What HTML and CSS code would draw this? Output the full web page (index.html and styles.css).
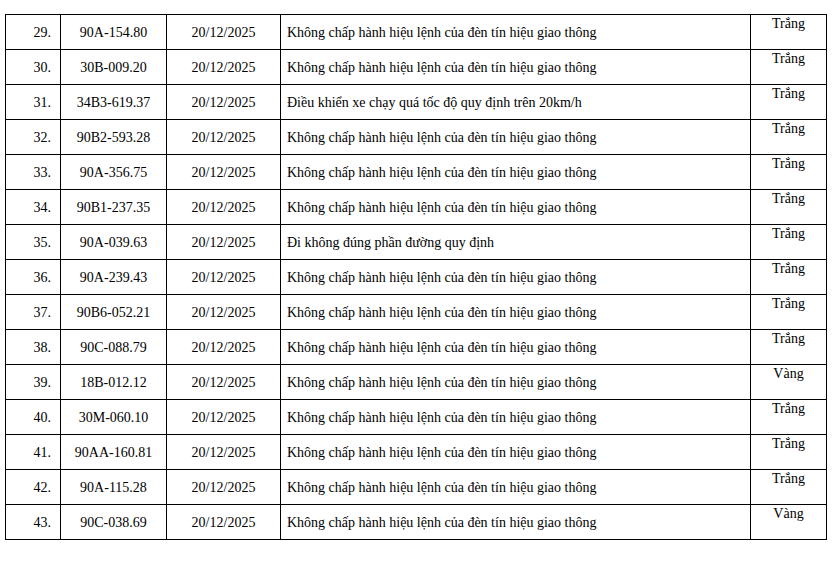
FILE: index.html
```html
<!DOCTYPE html>
<html lang="vi">
<head>
<meta charset="utf-8">
<link rel="stylesheet" href="styles.css">
</head>
<body>
<table class="list">
<colgroup>
<col class="c-no"><col class="c-plate"><col class="c-date"><col class="c-desc"><col class="c-color">
</colgroup>
<tbody>
<tr><td class="no">29.</td><td class="ctr">90A-154.80</td><td class="ctr">20/12/2025</td><td class="desc">Không chấp hành hiệu lệnh của đèn tín hiệu giao thông</td><td class="color">Trắng</td></tr>
<tr><td class="no">30.</td><td class="ctr">30B-009.20</td><td class="ctr">20/12/2025</td><td class="desc">Không chấp hành hiệu lệnh của đèn tín hiệu giao thông</td><td class="color">Trắng</td></tr>
<tr><td class="no">31.</td><td class="ctr">34B3-619.37</td><td class="ctr">20/12/2025</td><td class="desc">Điều khiển xe chạy quá tốc độ quy định trên 20km/h</td><td class="color">Trắng</td></tr>
<tr><td class="no">32.</td><td class="ctr">90B2-593.28</td><td class="ctr">20/12/2025</td><td class="desc">Không chấp hành hiệu lệnh của đèn tín hiệu giao thông</td><td class="color">Trắng</td></tr>
<tr><td class="no">33.</td><td class="ctr">90A-356.75</td><td class="ctr">20/12/2025</td><td class="desc">Không chấp hành hiệu lệnh của đèn tín hiệu giao thông</td><td class="color">Trắng</td></tr>
<tr><td class="no">34.</td><td class="ctr">90B1-237.35</td><td class="ctr">20/12/2025</td><td class="desc">Không chấp hành hiệu lệnh của đèn tín hiệu giao thông</td><td class="color">Trắng</td></tr>
<tr><td class="no">35.</td><td class="ctr">90A-039.63</td><td class="ctr">20/12/2025</td><td class="desc">Đi không đúng phần đường quy định</td><td class="color">Trắng</td></tr>
<tr><td class="no">36.</td><td class="ctr">90A-239.43</td><td class="ctr">20/12/2025</td><td class="desc">Không chấp hành hiệu lệnh của đèn tín hiệu giao thông</td><td class="color">Trắng</td></tr>
<tr><td class="no">37.</td><td class="ctr">90B6-052.21</td><td class="ctr">20/12/2025</td><td class="desc">Không chấp hành hiệu lệnh của đèn tín hiệu giao thông</td><td class="color">Trắng</td></tr>
<tr><td class="no">38.</td><td class="ctr">90C-088.79</td><td class="ctr">20/12/2025</td><td class="desc">Không chấp hành hiệu lệnh của đèn tín hiệu giao thông</td><td class="color">Trắng</td></tr>
<tr><td class="no">39.</td><td class="ctr">18B-012.12</td><td class="ctr">20/12/2025</td><td class="desc">Không chấp hành hiệu lệnh của đèn tín hiệu giao thông</td><td class="color">Vàng</td></tr>
<tr><td class="no">40.</td><td class="ctr">30M-060.10</td><td class="ctr">20/12/2025</td><td class="desc">Không chấp hành hiệu lệnh của đèn tín hiệu giao thông</td><td class="color">Trắng</td></tr>
<tr><td class="no">41.</td><td class="ctr">90AA-160.81</td><td class="ctr">20/12/2025</td><td class="desc">Không chấp hành hiệu lệnh của đèn tín hiệu giao thông</td><td class="color">Trắng</td></tr>
<tr><td class="no">42.</td><td class="ctr">90A-115.28</td><td class="ctr">20/12/2025</td><td class="desc">Không chấp hành hiệu lệnh của đèn tín hiệu giao thông</td><td class="color">Trắng</td></tr>
<tr><td class="no">43.</td><td class="ctr">90C-038.69</td><td class="ctr">20/12/2025</td><td class="desc">Không chấp hành hiệu lệnh của đèn tín hiệu giao thông</td><td class="color">Vàng</td></tr>
</tbody>
</table>
</body>
</html>
```
FILE: styles.css
```css
html, body {
  margin: 0;
  padding: 0;
  background: #fff;
}
body {
  font-family: "Liberation Serif", "Times New Roman", serif;
  font-size: 14px;
  color: #000;
}
.list {
  border-collapse: collapse;
  table-layout: fixed;
  width: 822px;
  margin: 14px 0 0 5px;
}
.c-no { width: 55px; }
.c-plate { width: 106px; }
.c-date { width: 114px; }
.c-desc { width: 470px; }
.c-color { width: 76px; }
.list td {
  border: 1px solid #000;
  height: 33px;
  padding: 1px 0 0;
  vertical-align: middle;
  line-height: 17px;
  white-space: nowrap;
}
.list td.no {
  text-align: right;
  padding-right: 9px;
}
.list td.ctr {
  text-align: center;
}
.list td.desc {
  padding-left: 6px;
}
.list td.color {
  text-align: center;
  vertical-align: top;
  padding-top: 0;
}
```
